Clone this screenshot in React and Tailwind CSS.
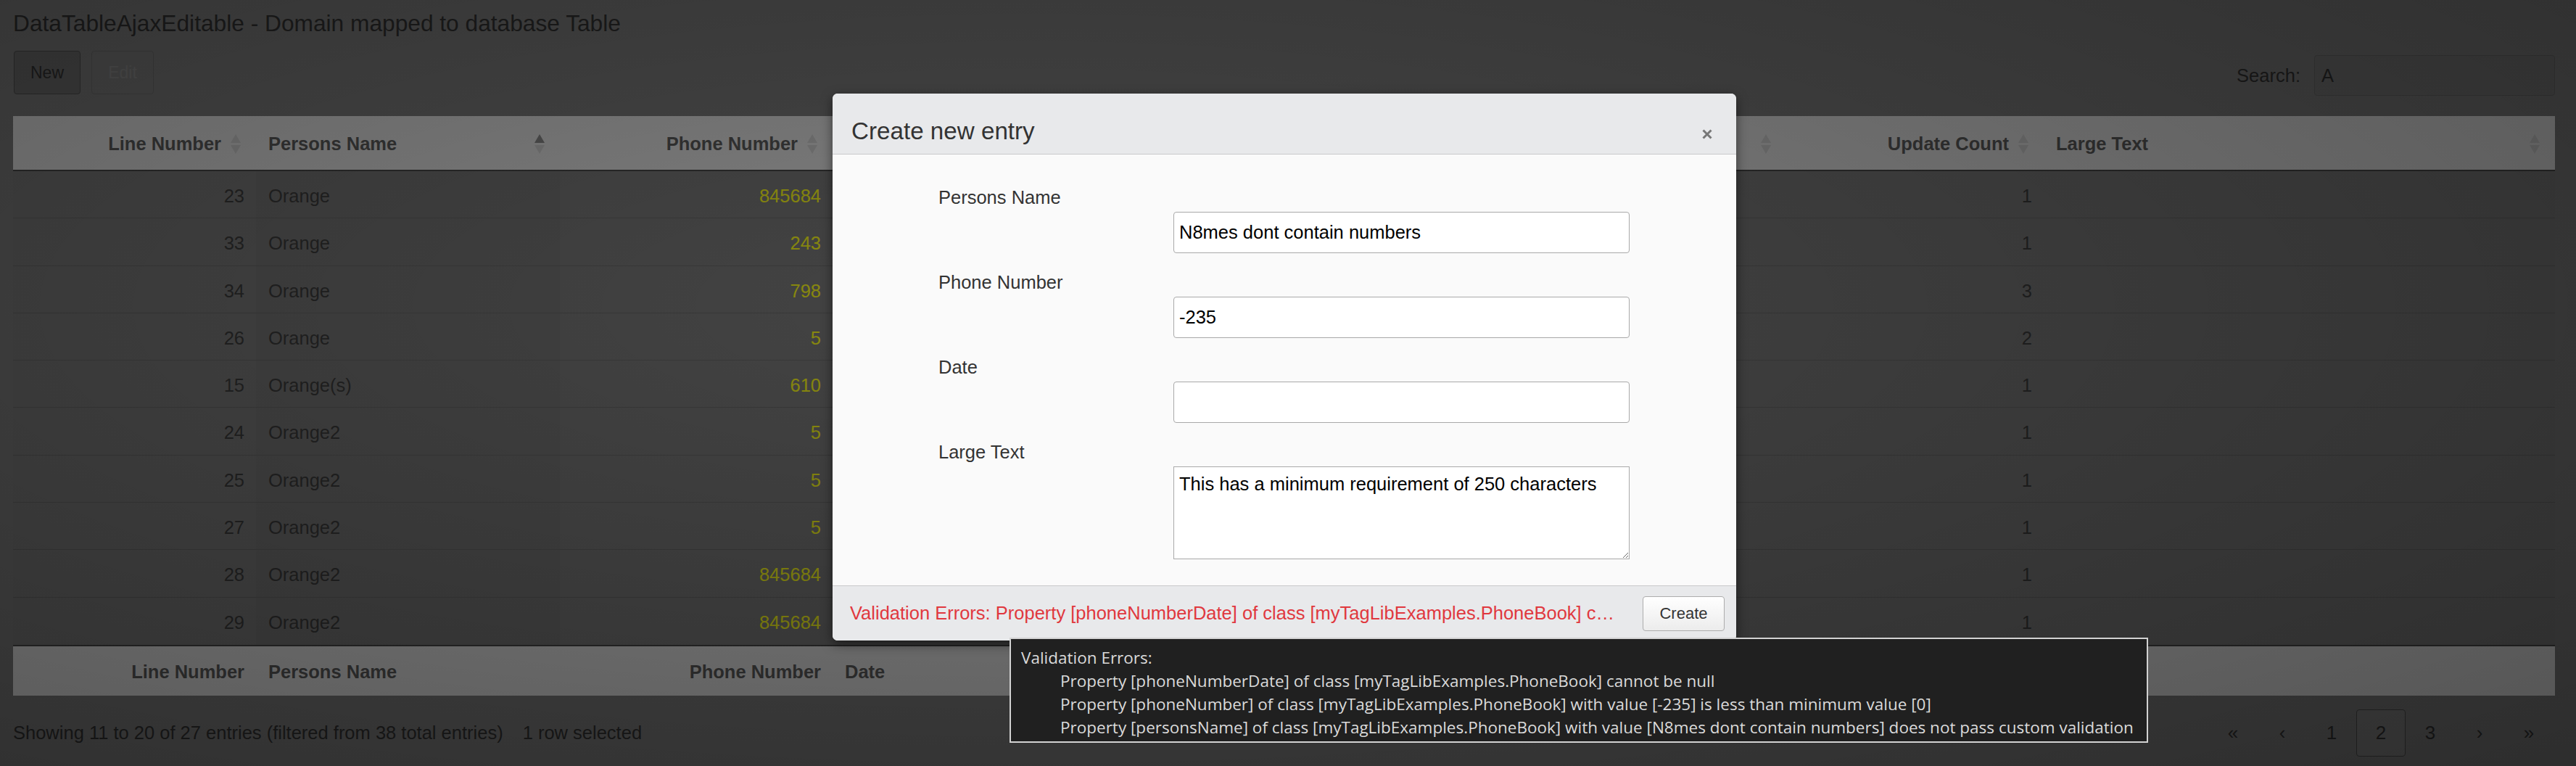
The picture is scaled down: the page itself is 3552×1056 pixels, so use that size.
import React from 'react'

const cols = 'grid grid-cols-[335px_419px_376px_1315px_355px_705px]'

const heads = [
  { label: 'Line Number', right: true, sort: 'both' },
  { label: 'Persons Name', right: false, sort: 'asc' },
  { label: 'Phone Number', right: true, sort: 'both' },
  { label: 'Date', right: false, sort: 'both' },
  { label: 'Update Count', right: true, sort: 'both' },
  { label: 'Large Text', right: false, sort: 'both' },
]

const rows = [
  { line: 23, name: 'Orange', phone: '845684', count: 1 },
  { line: 33, name: 'Orange', phone: '243', count: 1 },
  { line: 34, name: 'Orange', phone: '798', count: 3 },
  { line: 26, name: 'Orange', phone: '5', count: 2 },
  { line: 15, name: 'Orange(s)', phone: '610', count: 1 },
  { line: 24, name: 'Orange2', phone: '5', count: 1 },
  { line: 25, name: 'Orange2', phone: '5', count: 1 },
  { line: 27, name: 'Orange2', phone: '5', count: 1 },
  { line: 28, name: 'Orange2', phone: '845684', count: 1 },
  { line: 29, name: 'Orange2', phone: '845684', count: 1 },
]

const errors = [
  'Property [phoneNumberDate] of class [myTagLibExamples.PhoneBook] cannot be null',
  'Property [phoneNumber] of class [myTagLibExamples.PhoneBook] with value [-235] is less than minimum value [0]',
  'Property [personsName] of class [myTagLibExamples.PhoneBook] with value [N8mes dont contain numbers] does not pass custom validation',
]

const SortIcon = ({ dir }) => (
  <svg className="absolute right-[21px] top-[25px] w-[14px] h-[27px]" viewBox="0 0 14 27">
    <path d="M7 0L14 12H0Z" fill={dir === 'asc' ? '#8c8c8c' : '#d2d2d2'} />
    <path d="M0 15H14L7 27Z" fill="#d2d2d2" />
  </svg>
)

const Field = ({ label, value, area }) => (
  <div className="mb-[25px]">
    <label className="block pl-[146px] text-[25.5px] leading-[30px] text-[#333]">{label}</label>
    {area ? (
      <textarea
        defaultValue={value}
        className="block mt-[5px] ml-[470px] w-[629px] h-[128px] pt-[8px] px-[7px] border border-[#a9a9a9] bg-white text-[25.5px] leading-[30px] text-black"
      />
    ) : (
      <input
        defaultValue={value}
        className="block mt-[5px] ml-[470px] w-[629px] h-[57px] px-[7px] border border-[#a9a9a9] rounded-[4px] bg-white text-[25.5px] text-black"
      />
    )}
  </div>
)

export default function App() {
  return (
    <div className="relative w-[3552px] h-[1056px] overflow-hidden bg-[#7e7e7e] font-['Liberation_Sans',Arial,sans-serif]">
      <div className="w-[3505px] ml-[18px] pt-[14px]">
        <h1 className="text-[31.7px] leading-[36px] text-[#333]">DataTableAjaxEditable - Domain mapped to database Table</h1>

        {/* toolbar */}
        <div className="mt-[20px] flex justify-between items-start">
          <div className="flex gap-[15px] pl-[1px]">
            <button className="w-[92px] h-[60px] rounded-[4px] border border-[#505050] bg-[#6e6e6e] text-[23px] text-[#333]">New</button>
            <button className="w-[86px] h-[60px] rounded-[4px] border border-[#6e6e6e] text-[23px] text-[#8e8e8e]">Edit</button>
          </div>
          <div className="mt-[6px] flex items-center gap-[19px]">
            <span className="text-[25.5px] text-[#333]">Search:</span>
            <input defaultValue="A" className="w-[332px] h-[56px] px-[9px] rounded-[4px] border border-[#6a6a6a] bg-[#7a7a7a] text-[25.5px] text-[#333]" />
          </div>
        </div>

        {/* table */}
        <div className="mt-[28px] text-[25.5px] leading-[30px]">
          <div className={`${cols} h-[76px] bg-[#e8e8e8] border-b-2 border-[#4a4a4a]`}>
            {heads.map((h) => (
              <div key={h.label} className={`relative pt-[23px] font-bold text-[#5e5e5e] ${h.right ? 'text-right pr-[48px]' : 'pl-[17px]'}`}>
                {h.label}
                <SortIcon dir={h.sort} />
              </div>
            ))}
          </div>
          {rows.map((r, i) => (
            <div key={i} className={`${cols} h-[65.3px] bg-[#7c7c7c] text-[#3e3e3e] ${i < rows.length - 1 ? 'border-b border-[#6a6a6a]' : ''}`}>
              <div className="pt-[19px] pr-[16px] text-right">{r.line}</div>
              <div className="pt-[19px] pl-[17px] bg-[#787878]">{r.name}</div>
              <div className="pt-[19px] pr-[16px] text-right text-[#ffff1a]">{r.phone}</div>
              <div className="pt-[19px] pl-[17px]"></div>
              <div className="pt-[19px] pr-[16px] text-right">{r.count}</div>
              <div className="pt-[19px] pl-[17px]"></div>
            </div>
          ))}
          <div className={`${cols} h-[70px] bg-[#e8e8e8] border-t-2 border-[#4a4a4a] font-bold text-[#5e5e5e]`}>
            <div className="pt-[20px] pr-[16px] text-right">Line Number</div>
            <div className="pt-[20px] pl-[17px]">Persons Name</div>
            <div className="pt-[20px] pr-[16px] text-right">Phone Number</div>
            <div className="pt-[20px] pl-[17px]">Date</div>
            <div className="pt-[20px] pr-[16px] text-right">Update Count</div>
            <div className="pt-[20px] pl-[17px]">Large Text</div>
          </div>
        </div>

        {/* info + paging */}
        <div className="mt-[19px] h-[65px] flex items-center justify-between text-[25.5px] leading-[30px] text-[#333]">
          <div>
            Showing 11 to 20 of 27 entries (filtered from 38 total entries)
            <span className="ml-[27px]">1 row selected</span>
          </div>
          <div className="flex pr-[2px]">
            {['«', '‹', '1', '2', '3', '›', '»'].map((p, i) => (
              <div
                key={i}
                className={`w-[68px] h-[65px] flex items-center justify-center text-[26px] ${p === '2' ? 'border border-[#4e4e4e] rounded-[4px] bg-[#848484]' : ''}`}
              >
                {p}
              </div>
            ))}
          </div>
        </div>
      </div>

      {/* backdrop */}
      <div className="absolute inset-0 bg-[radial-gradient(ellipse_at_40%_40%,rgba(0,0,0,0.45)_0%,rgba(0,0,0,0.64)_100%)]" />

      {/* modal */}
      <div className="absolute left-[1148px] top-[129px] w-[1246px] h-[754px] flex flex-col rounded-[7px] overflow-hidden bg-[#fafafa] shadow-[0_5px_15px_rgba(0,0,0,0.5)]">
        <div className="h-[84px] shrink-0 flex justify-between items-start pl-[26px] pr-[33px] pt-[33px] bg-[#e8e9eb] border-b border-[#c8c9cb]">
          <h4 className="text-[33.2px] leading-[38px] text-[#333]">Create new entry</h4>
          <button className="mt-[16px]">
            <svg className="w-[14px] h-[14px]" viewBox="0 0 14 14">
              <path d="M1.5 1.5L12.5 12.5M12.5 1.5L1.5 12.5" stroke="#777" strokeWidth="3" />
            </svg>
          </button>
        </div>
        <div className="flex-1 pt-[44px]">
          <Field label="Persons Name" value="N8mes dont contain numbers" />
          <Field label="Phone Number" value="-235" />
          <Field label="Date" value="" />
          <Field label="Large Text" value="This has a minimum requirement of 250 characters" area />
        </div>
        <div className="h-[76px] shrink-0 flex items-center gap-[22px] pl-[24px] pr-[16px] bg-[#e8e9eb] border-t border-[#c8c9cb]">
          <div className="w-[1071px] shrink-0 pr-[9px] truncate text-[25.5px] text-[#e0383e]">
            Validation Errors: Property [phoneNumberDate] of class [myTagLibExamples.PhoneBook] cannot be null
          </div>
          <button className="w-[113px] h-[48px] rounded-[4px] border border-[#adadad] bg-gradient-to-b from-white to-[#ececec] text-[22px] text-[#333]">Create</button>
        </div>
      </div>

      {/* tooltip */}
      <div className="absolute left-[1392px] top-[879px] w-[1570px] h-[145px] pl-[14px] pt-[10px] bg-[#202020] border-2 border-[#d2d2d2] font-['Open_Sans',sans-serif] text-[22.5px] leading-[32px] text-[#dadada]">
        <div>Validation Errors:</div>
        {errors.map((e) => (
          <div key={e} className="pl-[54px] whitespace-nowrap">{e}</div>
        ))}
      </div>
    </div>
  )
}
